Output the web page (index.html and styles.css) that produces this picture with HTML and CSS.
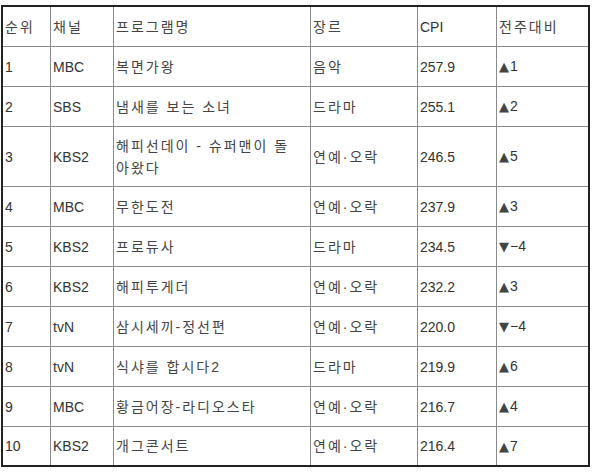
FILE: index.html
```html
<!DOCTYPE html>
<html lang="ko">
<head>
<meta charset="utf-8">
<link rel="stylesheet" href="styles.css">
</head>
<body>
<table class="rank">
  <colgroup>
    <col class="c1"><col class="c2"><col class="c3"><col class="c4"><col class="c5"><col class="c6">
  </colgroup>
  <tr><td class="ko">순위</td><td class="ko">채널</td><td class="ko">프로그램명</td><td class="ko">장르</td><td>CPI</td><td class="ko">전주대비</td></tr>
  <tr><td>1</td><td>MBC</td><td class="ko">복면가왕</td><td class="ko">음악</td><td>257.9</td><td><span class="tri">▲</span>1</td></tr>
  <tr><td>2</td><td>SBS</td><td class="ko">냄새를 보는 소녀</td><td class="ko">드라마</td><td>255.1</td><td><span class="tri">▲</span>2</td></tr>
  <tr class="tall"><td>3</td><td>KBS2</td><td class="ko">해피선데이 - 슈퍼맨이 돌<br>아왔다</td><td class="ko">연예·오락</td><td>246.5</td><td><span class="tri">▲</span>5</td></tr>
  <tr><td>4</td><td>MBC</td><td class="ko">무한도전</td><td class="ko">연예·오락</td><td>237.9</td><td><span class="tri">▲</span>3</td></tr>
  <tr><td>5</td><td>KBS2</td><td class="ko">프로듀사</td><td class="ko">드라마</td><td>234.5</td><td><span class="tri">▼</span>−4</td></tr>
  <tr><td>6</td><td>KBS2</td><td class="ko">해피투게더</td><td class="ko">연예·오락</td><td>232.2</td><td><span class="tri">▲</span>3</td></tr>
  <tr><td>7</td><td>tvN</td><td class="ko">삼시세끼-정선편</td><td class="ko">연예·오락</td><td>220.0</td><td><span class="tri">▼</span>−4</td></tr>
  <tr><td>8</td><td>tvN</td><td class="ko">식샤를 합시다2</td><td class="ko">드라마</td><td>219.9</td><td><span class="tri">▲</span>6</td></tr>
  <tr><td>9</td><td>MBC</td><td class="ko">황금어장-라디오스타</td><td class="ko">연예·오락</td><td>216.7</td><td><span class="tri">▲</span>4</td></tr>
  <tr class="last"><td>10</td><td>KBS2</td><td class="ko">개그콘서트</td><td class="ko">연예·오락</td><td>216.4</td><td><span class="tri">▲</span>7</td></tr>
</table>
</body>
</html>
```

FILE: styles.css
```css
html, body {
  margin: 0;
  padding: 0;
  background: #fff;
}
body {
  padding: 5px 0 0 1px;
  font-family: "Liberation Sans", Arial, "Noto Sans CJK KR", sans-serif;
  font-size: 14px;
  color: #333;
}
.rank {
  border-collapse: separate;
  border-spacing: 0;
  border: 2px solid #222;
  table-layout: fixed;
  width: 589px;
}
.c1 { width: 48px; }
.c2 { width: 63px; }
.c3 { width: 197px; }
.c4 { width: 107px; }
.c5 { width: 79px; }
.c6 { width: 91px; }
.rank td {
  box-sizing: border-box;
  height: 40px;
  padding: 0 2px;
  line-height: 20px;
  vertical-align: middle;
  border-right: 1px solid #8a8a8a;
  border-bottom: 1px solid #8a8a8a;
  text-align: left;
  white-space: nowrap;
}
.rank td.ko {
  letter-spacing: 2px;
  color: #444;
}
.rank td:last-child {
  border-right: none;
}
.rank tr.tall td {
  height: 60px;
  line-height: 22px;
}
.rank tr.last td {
  border-bottom: none;
  height: 38px;
}
.tri {
  font-family: "DejaVu Sans", sans-serif;
  font-size: 13px;
  color: #444;
  margin-right: 1px;
}
```
